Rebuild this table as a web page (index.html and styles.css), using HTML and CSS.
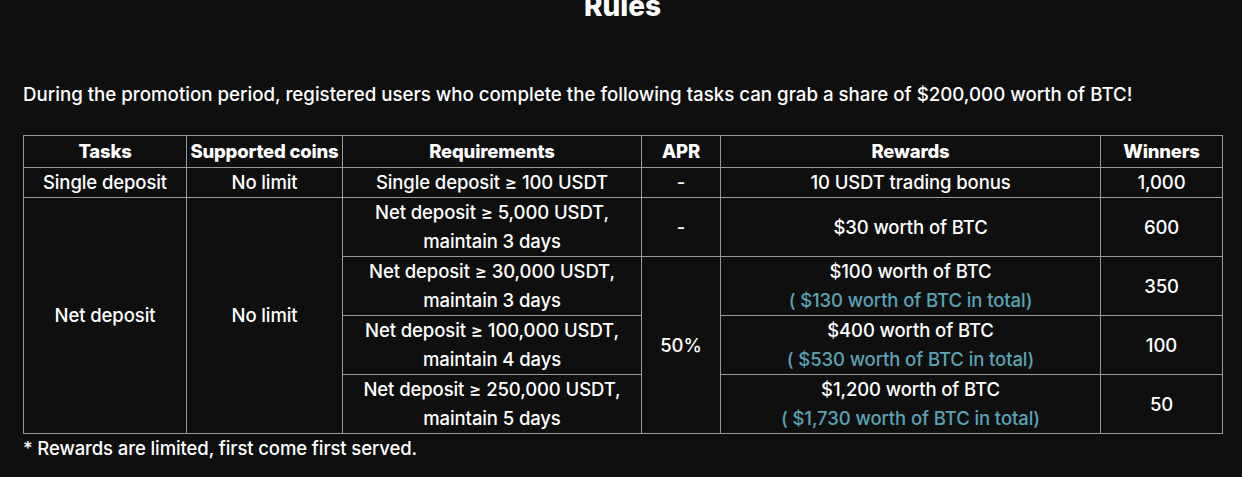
FILE: index.html
```html
<!DOCTYPE html>
<html>
<head>
<meta charset="utf-8">
<link rel="stylesheet" href="styles.css">
</head>
<body>
<div class="page">
  <h2 class="title">Rules</h2>
  <p class="intro">During the promotion period, registered users who complete the following tasks can grab a share of $200,000 worth of BTC!</p>
  <table class="rules">
    <colgroup>
      <col class="c1"><col class="c2"><col class="c3"><col class="c4"><col class="c5"><col class="c6">
    </colgroup>
    <thead>
      <tr><th>Tasks</th><th>Supported coins</th><th>Requirements</th><th>APR</th><th>Rewards</th><th>Winners</th></tr>
    </thead>
    <tbody>
      <tr><td>Single deposit</td><td>No limit</td><td>Single deposit ≥ 100 USDT</td><td>-</td><td>10 USDT trading bonus</td><td>1,000</td></tr>
      <tr><td rowspan="4">Net deposit</td><td rowspan="4">No limit</td><td>Net deposit ≥ 5,000 USDT,<br>maintain 3 days</td><td>-</td><td>$30 worth of BTC</td><td>600</td></tr>
      <tr><td>Net deposit ≥ 30,000 USDT,<br>maintain 3 days</td><td rowspan="3">50%</td><td>$100 worth of BTC<br><span class="total">( $130 worth of BTC in total)</span></td><td>350</td></tr>
      <tr><td>Net deposit ≥ 100,000 USDT,<br>maintain 4 days</td><td>$400 worth of BTC<br><span class="total">( $530 worth of BTC in total)</span></td><td>100</td></tr>
      <tr><td>Net deposit ≥ 250,000 USDT,<br>maintain 5 days</td><td>$1,200 worth of BTC<br><span class="total">( $1,730 worth of BTC in total)</span></td><td>50</td></tr>
    </tbody>
  </table>
  <p class="note">* Rewards are limited, first come first served.</p>
</div>
</body>
</html>
```

FILE: styles.css
```css
html, body {
  margin: 0;
  padding: 0;
  background: #0f0f0f;
  color: #ffffff;
  font-family: Inter, "Noto Sans", sans-serif;
}
.page {
  padding: 0 20px 0 23px;
  height: 477px;
  overflow: hidden;
}
.title {
  margin: -16px 0 0;
  text-align: center;
  font-size: 28px;
  line-height: 44px;
  font-weight: 800;
}
.intro {
  margin: 53px 0 0;
  font-size: 18.7px;
  line-height: 28px;
  font-weight: 500;
  letter-spacing: 0;
}
.rules {
  margin-top: 26px;
  width: 1200px;
  border-collapse: collapse;
  table-layout: fixed;
  font-size: 18.5px;
  font-weight: 500;
  letter-spacing: -0.1px;
}
.c1 { width: 163px; }
.c2 { width: 156px; }
.c3 { width: 299px; }
.c4 { width: 79px; }
.c5 { width: 380px; }
.c6 { width: 122px; }
.rules th, .rules td {
  border: 1px solid #9a9a9a;
  text-align: center;
  vertical-align: middle;
  padding: 0;
  line-height: 29px;
}
.rules th {
  font-weight: 800;
  height: 31px;
  white-space: nowrap;
  letter-spacing: -0.2px;
}
.rules td { height: 29px; }
.total { color: #5aa3b4; }
.note {
  margin: 0;
  font-size: 18.5px;
  line-height: 28px;
  font-weight: 500;
  letter-spacing: -0.1px;
}
```
